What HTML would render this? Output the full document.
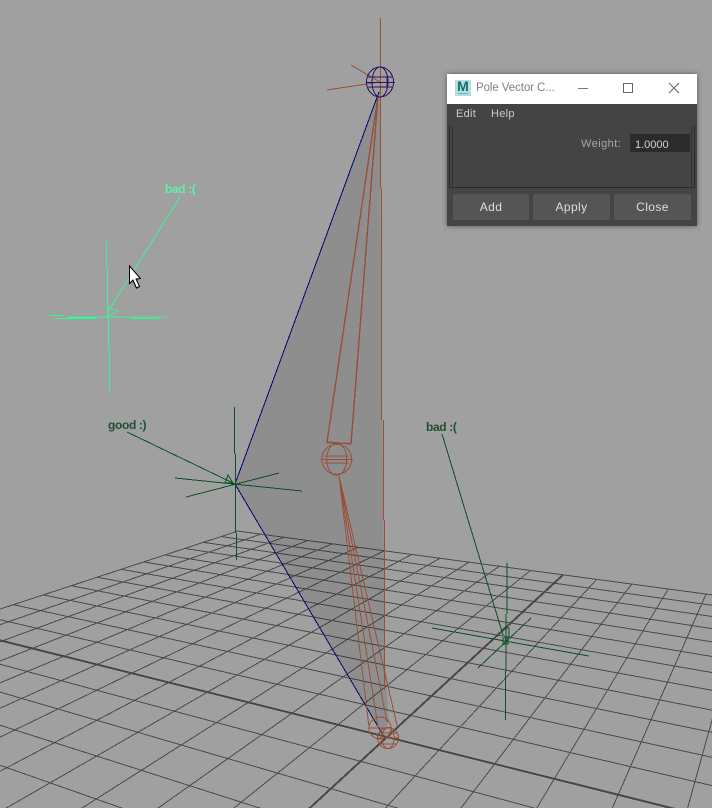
<!DOCTYPE html>
<html>
<head>
<meta charset="utf-8">
<style>
html,body{margin:0;padding:0;background:#a0a0a0;overflow:hidden;}
#v{position:relative;width:712px;height:808px;overflow:hidden;background:#a0a0a0;font-family:"Liberation Sans",sans-serif;}
svg{position:absolute;left:0;top:0;}
.l{position:absolute;font-size:12px;font-weight:bold;white-space:nowrap;line-height:14px;letter-spacing:-.35px;}
#w{position:absolute;left:447px;top:74px;width:250px;height:152px;background:#444;box-shadow:0 0 5px rgba(0,0,0,.45);}
#t{position:absolute;left:0;top:0;width:250px;height:30px;background:#fff;}
.a{position:absolute;white-space:nowrap;}
.b{position:absolute;top:120px;height:26px;background:#555;color:#ddd;font-size:12px;line-height:27px;text-align:center;letter-spacing:.4px;border-radius:1px;}
</style>
</head>
<body>
<div id="v">
<svg width="712" height="808" viewBox="0 0 712 808" shape-rendering="crispEdges">
<g stroke="#4a4a4a" stroke-width="1" fill="none">
<path d="M238 531L-642.7 820M260.6 534.2L-562.5 820M283.8 537.3L-484.1 820M307.7 540.5L-405.8 820M332.4 543.8L-327.6 820M358 547.3L-248.7 820M384.3 550.8L-170.9 820M411.6 554.5L-92.5 820M439.8 558.3L-14.4 820M468.9 562.2L63.2 820M499.2 566.3L141.3 820M530.5 570.5L219 820M596.7 579.4L374.4 820M631.7 584.1L451.9 820M668.2 589L529.6 820M706 594.2L607.1 820M745.4 599.5L684.3 820"/>
<path d="M238 531.1L730 597.3M221.4 536.6L730 607.8M203.8 542.4L730 619.1M185.1 548.5L730 631.3M165.3 555L730 644.7M144.2 562L730 659.5M121.6 569.4L730 675.7M97.4 577.3L730 693.6M71.6 585.8L730 713.6M43.8 595L730 736M13.9 604.8L730 761.2M-18.5 615.4L730 789.8M-91.7 639.5L730 860.8M-133.4 653.1L730 905.2M-179 668.1L730 958.1M-229.2 684.6L730 1022"/>
</g>
<g stroke="#484848" stroke-width="2" fill="none">
<path d="M563 574.9L296.8 820"/>
<path d="M-53.6 626.9L730 822.7"/>
</g>
<polygon points="380,88 235,484 383,735 389,722 385,660 383.5,520 381,300" fill="#000" fill-opacity=".11" shape-rendering="auto"/>
<g fill="none" stroke="#00086e" stroke-width="1">
<path d="M379 92L235 484L383 735"/>
</g>
<g fill="#99503a" stroke="none">
<rect x="380" y="18" width="1" height="170"/>
<rect x="381" y="188" width="1" height="232"/>
<rect x="383" y="420" width="1" height="100"/>
<rect x="384" y="520" width="1" height="170"/>
</g>
<g fill="none" stroke="#99503a" stroke-width="1">
<path d="M351 65L380 82M327 90L380 82"/>
<path d="M378 96L327 442L351 444L378 96" stroke-width="1.4"/>
<path d="M339 476L369 727M339 476L378 727M339 476L387 722M339 476L397 725"/>
<circle cx="336.7" cy="459.3" r="15"/>
<ellipse cx="336.7" cy="459.3" rx="10" ry="16"/>
<path d="M321 459.5H353M324 456H349M324 463H349M327 443L347 443"/>
<circle cx="380" cy="728" r="11"/>
<circle cx="388" cy="738" r="10.5"/>
<ellipse cx="388" cy="738" rx="6" ry="10.5"/>
<path d="M377 738H399M379 733H397M379 744H397M369 728H391"/>
</g>
<g fill="none" stroke="#2b1160" stroke-width="1">
<ellipse cx="380" cy="82" rx="13.5" ry="15"/>
<ellipse cx="380" cy="82" rx="8" ry="15"/>
<path d="M366 82.5H395M368 77H392M368 87H392M387 77V87"/>
</g>
<g fill="none" stroke="#0b4f26" stroke-width="1">
<path d="M127 432L235 484"/>
<path d="M234.5 407V454M235.5 454V533M236.5 533V560"/>
<path d="M175 478L302 491M186 497L279 473"/>
<path d="M225 483L228 475L233 483Z"/>
<path d="M442 434L503 635"/>
<path d="M507 563V614M506 614V671M505.5 671V720"/>
<path d="M432 628L589 656M478 668L531 618"/>
<path d="M501 633L504 628H509V636L505 640"/>
<path d="M503 638H508V644H503Z"/>
</g>
<g fill="none" stroke="#39f59a" stroke-width="1">
<path d="M180 197L109 310"/>
<path d="M106.5 241V267M107.5 267V317M108.5 317V350M109.5 350V392"/>
<path d="M49 315.5H63M68 317H167M55 318.5H97M130 318.5H159"/>
<path d="M68 317.5H97" stroke-width="2"/>
<path d="M108 307L118 311L108 316Z"/>
</g>
<path d="M131 271L140 280L135.5 280.5L139 288L136 289.5L132.5 282L129.5 285Z" fill="#000" fill-opacity=".25" shape-rendering="auto"/>
<path d="M129.5 266V283.5L133 280L136.5 288L139.5 286.5L136 279L140.5 278.5Z" fill="#fff" stroke="#000" stroke-width="1" shape-rendering="auto"/>
</svg>

<div class="l" style="left:165px;top:182px;color:#5df2a6;">bad :(</div>
<div class="l" style="left:108px;top:418px;color:#1f4f32;">good :)</div>
<div class="l" style="left:426px;top:420px;color:#1f4f32;">bad :(</div>

<div id="w">
 <div id="t">
  <div class="a" style="left:8px;top:6px;width:16px;height:16px;background:#b5dede;"></div>
  <div class="a" style="left:9px;top:4px;width:14px;text-align:center;font-size:14px;font-weight:bold;color:#136b78;line-height:17px;">M</div>
  <div class="a" style="left:11px;top:19px;width:10px;height:1px;background:#6fb0b4;"></div>
  <div class="a" style="left:29px;top:7px;font-size:11.5px;letter-spacing:-.08px;color:#808080;line-height:15px;">Pole Vector C...</div>
  <svg width="250" height="30" viewBox="0 0 250 30">
   <path d="M131 14.5H141" stroke="#777" stroke-width="1"/>
   <rect x="176.5" y="9.5" width="9" height="9" fill="none" stroke="#666"/>
   <path d="M222 9L232 19M232 9L222 19" stroke="#666" stroke-width="1" fill="none"/>
  </svg>
 </div>
 <div class="a" style="left:9px;top:33px;font-size:11px;color:#ccc;letter-spacing:.3px;line-height:14px;">Edit</div>
 <div class="a" style="left:44px;top:33px;font-size:11px;color:#ccc;letter-spacing:.3px;line-height:14px;">Help</div>
 <svg width="250" height="152" viewBox="0 0 250 152">
  <path d="M2.5 52V113.5H247.5V52" fill="none" stroke="#2a2a2a"/>
  <path d="M5.5 52V112M244.5 52V112" fill="none" stroke="#303030"/>
 </svg>
 <div class="a" style="left:134px;top:63px;font-size:11px;color:#a8a8a8;letter-spacing:.45px;line-height:14px;">Weight:</div>
 <div class="a" style="left:183px;top:60px;width:60px;height:18px;background:#2b2b2b;"></div>
 <div class="a" style="left:188px;top:64px;font-size:11px;color:#d0d0d0;line-height:14px;">1.0000</div>
 <div class="b" style="left:6px;width:76px;">Add</div>
 <div class="b" style="left:86px;width:77px;">Apply</div>
 <div class="b" style="left:167px;width:77px;">Close</div>
</div>
</div>
</body>
</html>
